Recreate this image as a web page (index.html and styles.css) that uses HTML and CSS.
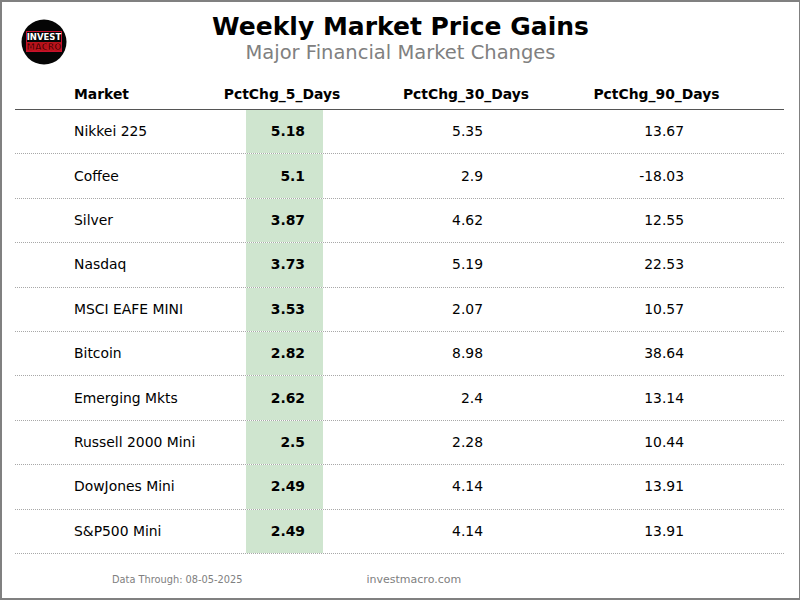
FILE: index.html
```html
<!DOCTYPE html>
<html>
<head>
<meta charset="utf-8">
<link rel="stylesheet" href="styles.css">
</head>
<body>
<div class="frame">
  <header class="top">
    <div class="logo-cell">
      <svg class="logo" width="46" height="46" viewBox="0 0 46 46">
        <circle cx="23" cy="23" r="22.5" fill="#050505"/>
        <rect x="5.5" y="12.5" width="35" height="20" fill="none" stroke="#c8102e" stroke-width="1"/>
        <rect x="6" y="23" width="34" height="9" fill="#b5121b"/>
        <text x="23" y="21" text-anchor="middle" class="logo-t1">INVEST</text>
        <text x="23" y="30.5" text-anchor="middle" class="logo-t2">MACRO</text>
      </svg>
    </div>
    <div class="titles">
      <h1 class="title">Weekly Market Price Gains</h1>
      <div class="subtitle">Major Financial Market Changes</div>
    </div>
    <div></div>
  </header>

  <div class="table">
    <div class="row head">
      <div class="c1">Market</div>
      <div class="c2">PctChg_5_Days</div>
      <div class="c3">PctChg_30_Days</div>
      <div class="c4">PctChg_90_Days</div>
    </div>
    <div class="row"><div class="c1">Nikkei 225</div><div class="c2">5.18</div><div class="c3">5.35</div><div class="c4">13.67</div></div>
    <div class="row"><div class="c1">Coffee</div><div class="c2">5.1</div><div class="c3">2.9</div><div class="c4">-18.03</div></div>
    <div class="row"><div class="c1">Silver</div><div class="c2">3.87</div><div class="c3">4.62</div><div class="c4">12.55</div></div>
    <div class="row"><div class="c1">Nasdaq</div><div class="c2">3.73</div><div class="c3">5.19</div><div class="c4">22.53</div></div>
    <div class="row"><div class="c1">MSCI EAFE MINI</div><div class="c2">3.53</div><div class="c3">2.07</div><div class="c4">10.57</div></div>
    <div class="row"><div class="c1">Bitcoin</div><div class="c2">2.82</div><div class="c3">8.98</div><div class="c4">38.64</div></div>
    <div class="row"><div class="c1">Emerging Mkts</div><div class="c2">2.62</div><div class="c3">2.4</div><div class="c4">13.14</div></div>
    <div class="row"><div class="c1">Russell 2000 Mini</div><div class="c2">2.5</div><div class="c3">2.28</div><div class="c4">10.44</div></div>
    <div class="row"><div class="c1">DowJones Mini</div><div class="c2">2.49</div><div class="c3">4.14</div><div class="c4">13.91</div></div>
    <div class="row"><div class="c1">S&amp;P500 Mini</div><div class="c2">2.49</div><div class="c3">4.14</div><div class="c4">13.91</div></div>
  </div>

  <footer class="foot">
    <span class="date">Data Through: 08-05-2025</span>
    <span class="site">investmacro.com</span>
  </footer>
</div>
</body>
</html>
```

FILE: styles.css
```css
* { box-sizing: border-box; }
html, body { margin: 0; padding: 0; }
body {
  width: 800px;
  height: 600px;
  background: #fff;
  font-family: "DejaVu Sans", "Liberation Sans", sans-serif;
  color: #000;
}
.frame {
  width: 800px;
  height: 600px;
  border: 2px solid #808080;
  border-right-width: 1px;
  display: flex;
  flex-direction: column;
  overflow: hidden;
}
.top {
  height: 78px;
  display: grid;
  grid-template-columns: 1fr auto 1fr;
}
.logo-cell {
  padding-left: 19px;
  padding-top: 17px;
}
.logo { display: block; }
.logo-t1 {
  font-family: "DejaVu Sans", sans-serif;
  font-weight: bold;
  font-size: 8.5px;
  fill: #ffffff;
}
.logo-t2 {
  font-family: "DejaVu Sans", sans-serif;
  font-weight: bold;
  font-size: 8.5px;
  fill: #3a0000;
  stroke: #e0202a;
  stroke-width: 0.4px;
}
.titles {
  text-align: center;
  padding-top: 10px;
}
.title {
  margin: 0;
  font-size: 25px;
  line-height: 29px;
  font-weight: bold;
}
.subtitle {
  font-size: 19.5px;
  line-height: 24px;
  color: #808080;
}
.table {
  margin-left: 13px;
  width: 769px;
}
.row {
  display: grid;
  grid-template-columns: 231px 77px 237px 224px;
  height: 44.4px;
  border-bottom: 1px dotted #a8a8a8;
  font-size: 13.9px;
}
.row > div {
  display: flex;
  align-items: center;
  white-space: nowrap;
  padding-bottom: 1px;
}
.row .c1 { padding-left: 59px; }
.row .c2 {
  justify-content: flex-end;
  padding-right: 18px;
  background: #cfe5cf;
  font-weight: bold;
}
.row .c3 { justify-content: flex-end; padding-right: 77px; }
.row .c4 { justify-content: flex-end; padding-right: 100px; }
.row.head {
  height: 30px;
  border-bottom: 1px solid #555;
  font-weight: bold;
  font-size: 13.9px;
}
.row.head > div { padding-bottom: 2px; }
.row.head .c2 {
  background: none;
  justify-content: center;
  padding-right: 5px;
}
.row.head .c3 { justify-content: center; padding-right: 0; padding-left: 49px; }
.row.head .c4 { justify-content: center; padding-right: 31px; }
.foot {
  display: flex;
  align-items: center;
  padding-left: 110px;
  padding-top: 19px;
  color: #808080;
}
.date { font-size: 9.8px; }
.site { font-size: 11px; margin-left: 124px; }
```
